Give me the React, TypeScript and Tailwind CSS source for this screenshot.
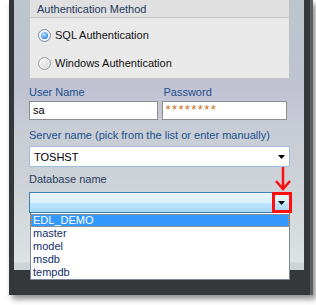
import React from "react";

const Tri = () => (
  <svg width="7" height="4" viewBox="0 0 7 4" className="block">
    <path d="M0 0 L7 0 L3.5 4 Z" fill="#000" />
  </svg>
);

function Radio({ checked }: { checked?: boolean }) {
  return (
    <div
      className={
        "w-[13px] h-[13px] rounded-full border flex items-center justify-center " +
        (checked
          ? "border-[#7a8da0] bg-[radial-gradient(circle_at_40%_35%,#ffffff,#dfe7ef)]"
          : "border-[#9a9a9a] bg-[radial-gradient(circle_at_40%_35%,#ffffff,#dcdcdc)]")
      }
    >
      {checked ? (
        <div className="w-[7px] h-[7px] rounded-full bg-[radial-gradient(circle_at_40%_35%,#bfe4ff,#3a8ee6_70%,#1d64c4)]" />
      ) : (
        <div className="w-[7px] h-[7px] rounded-full bg-[radial-gradient(circle_at_40%_35%,#f4f4f4,#d2d2d2)]" />
      )}
    </div>
  );
}

export default function App() {
  return (
    <div
      className="w-[316px] h-[305px] bg-white relative overflow-hidden text-[11px] leading-[14px]"
      style={{ fontFamily: '"Liberation Sans", Arial, sans-serif' }}
    >
      {/* window frame */}
      <div className="ml-[9px] w-[304px] h-[295px] bg-[#34383b] pl-[5px] pr-[6px] shadow-[3px_4px_6px_rgba(0,0,0,0.45)] border-r-[3px] border-r-[#5c5f61]">
        <div className="h-[270px] relative bg-[linear-gradient(180deg,#bcc6ce_0px,#bec4d0_60px,#c1c2d3_90px,#c8ccd5_130px,#ccd2d7_180px,#d6dcde_230px,#dde3e3_262px,#cfd5d7_263px,#cfd5d7_270px)] pl-[15px] pr-[17px] flex flex-col">
          {/* group box */}
          <div className="w-[261px] h-[79px] bg-[#e9e9e9] border-l border-r border-b border-[#c2c2c2] flex flex-col">
            <div className="h-[18px] bg-[#e0e0e0] border-b border-[#c6c6c6] pl-[7px] leading-[18px] text-[#1e395b]">
              Authentication Method
            </div>
            <div className="flex flex-col pt-[3px] pl-[8px]">
              <div className="h-[28px] flex items-center gap-[4px] text-[#111]">
                <Radio checked />
                <span>SQL Authentication</span>
              </div>
              <div className="h-[28px] flex items-center gap-[4px] text-[#111]">
                <Radio />
                <span>Windows Authentication</span>
              </div>
            </div>
          </div>

          {/* user / password */}
          <div className="flex gap-[4px] mt-[6px]">
            <div className="w-[131px] flex flex-col gap-[2px]">
              <div className="h-[14px] text-[#20508c]">User Name</div>
              <div className="h-[19px] bg-white border border-[#8e8f8f] pl-[3px] leading-[17px] text-black">
                sa
              </div>
            </div>
            <div className="w-[126px] flex flex-col gap-[2px]">
              <div className="h-[14px] text-[#20508c] pl-[1px]">Password</div>
              <div className="h-[19px] bg-white border border-[#8e8f8f] pl-[2px] leading-[15px] text-[13px] tracking-[1.4px] text-[#c8731c]">
                ********
              </div>
            </div>
          </div>

          {/* server */}
          <div className="mt-[8px] h-[14px] text-[#20508c]">
            Server name (pick from the list or enter manually)
          </div>
          <div className="mt-[4px] w-[261px] h-[21px] bg-white border border-[#9cbde0] flex items-center justify-between pl-[4px] pr-[4px] text-black">
            <span>TOSHST</span>
            <Tri />
          </div>

          {/* database */}
          <div className="mt-[5px] h-[14px] text-[#2a3d5e]">Database name</div>
          <div className="mt-[6px] relative w-[261px]">
            <div className="h-[21px] border border-[#3c7fb1] bg-[linear-gradient(180deg,#eaf6fd,#d9f0fc_50%,#bee6fd_50%,#a7d9f5)] flex items-center justify-end pr-[4px]">
              <Tri />
            </div>
            {/* red highlight box */}
            <div className="absolute top-0 right-[-2px] w-[20px] h-[21px] border-[3px] border-[#ff1010]" />
            {/* dropdown list */}
            <div className="absolute top-[21px] left-[1px] right-0 h-[67px] bg-white border-l border-r border-b border-[#7d8a9c] pt-[1px] z-10 text-[#152f6a] leading-[13px]">
              <div className="h-[13px] bg-[#3399ff] text-white border border-dotted border-[#e08a3a] pl-[1px] leading-[11px]">
                EDL_DEMO
              </div>
              <div className="h-[13px] pl-[2px]">master</div>
              <div className="h-[13px] pl-[2px]">model</div>
              <div className="h-[13px] pl-[2px]">msdb</div>
              <div className="h-[13px] pl-[2px]">tempdb</div>
            </div>
          </div>
        </div>
      </div>

      {/* red arrow annotation */}
      <svg className="absolute left-0 top-0 pointer-events-none" width="316" height="305">
        <line x1="283" y1="167" x2="283" y2="189" stroke="#ff1010" strokeWidth="2.5" />
        <polyline points="276,181 283,189 290,181" fill="none" stroke="#ff1010" strokeWidth="2.5" />
      </svg>
    </div>
  );
}
